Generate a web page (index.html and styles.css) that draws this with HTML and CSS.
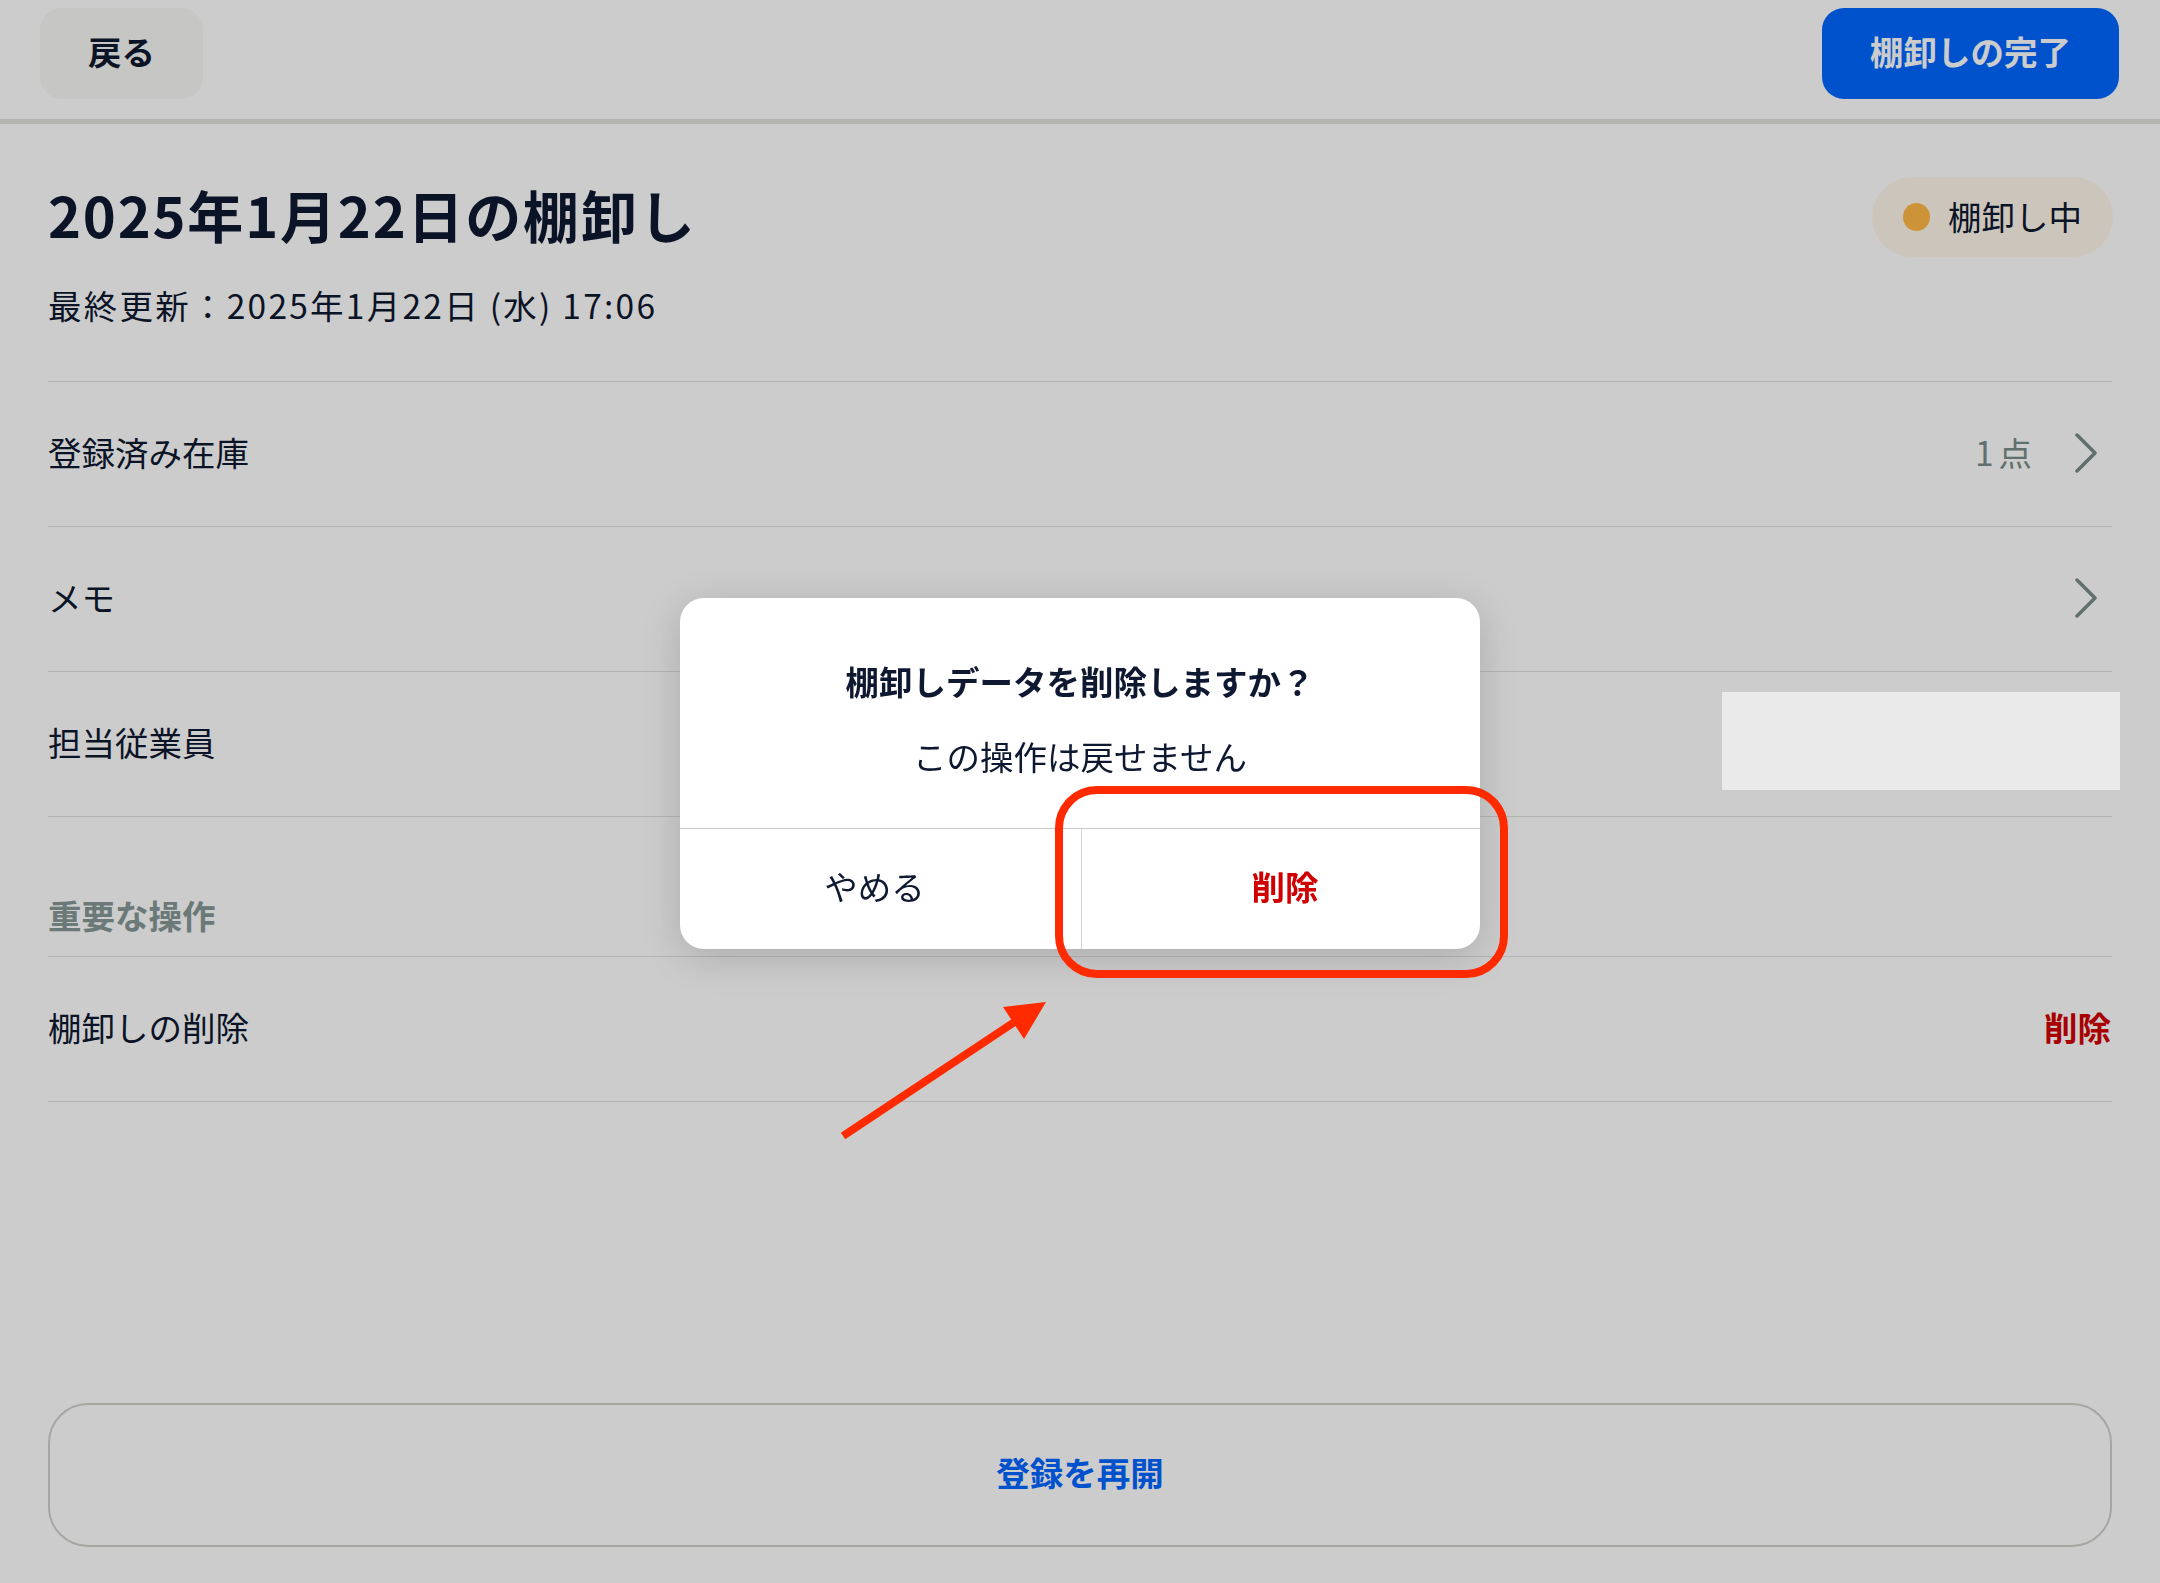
FILE: index.html
```html
<!DOCTYPE html>
<html lang="ja">
<head>
<meta charset="utf-8">
<title>棚卸し</title>
<link rel="stylesheet" href="styles.css">
</head>
<body>
<div class="page">
  <header class="topbar">
    <button class="btn btn-back">戻る</button>
    <button class="btn btn-primary">棚卸しの完了</button>
  </header>
  <main class="content">
    <div class="title-row">
      <h1 class="title">2025年1月22日の棚卸し</h1>
      <span class="badge"><span class="dot"></span>棚卸し中</span>
    </div>
    <p class="updated">最終更新：2025年1月22日 (水) 17:06</p>

    <ul class="list">
      <li class="row">
        <span class="label">登録済み在庫</span>
        <span class="trail"><span class="count">1点</span>
          <svg class="chev" viewBox="0 0 40 40" width="40" height="40"><path d="M11 2 L29 20 L11 38"/></svg>
        </span>
      </li>
      <li class="row">
        <span class="label">メモ</span>
        <span class="trail">
          <svg class="chev" viewBox="0 0 40 40" width="40" height="40"><path d="M11 2 L29 20 L11 38"/></svg>
        </span>
      </li>
      <li class="row">
        <span class="label">担当従業員</span>
      </li>
    </ul>

    <section class="danger">
      <h2 class="section-title">重要な操作</h2>
      <ul class="list">
        <li class="row">
          <span class="label">棚卸しの削除</span>
          <span class="danger-link">削除</span>
        </li>
      </ul>
    </section>

    <button class="btn-outline">登録を再開</button>
  </main>
</div>

<div class="backdrop"></div>
<div class="redact"></div>

<div class="dialog" role="dialog">
  <div class="dialog-body">
    <p class="dialog-title">棚卸しデータを削除しますか？</p>
    <p class="dialog-text">この操作は戻せません</p>
  </div>
  <div class="dialog-actions">
    <button class="dialog-btn dialog-btn-cancel">やめる</button>
    <button class="dialog-btn dialog-btn-danger">削除</button>
  </div>
</div>

<div class="callout-box"></div>
<svg class="callout-arrow" viewBox="0 0 230 160" width="230" height="160">
  <line x1="13" y1="146" x2="186" y2="31" stroke="#ff2a00" stroke-width="8"/>
  <polygon points="216,12 173,17 194,49" fill="#ff2a00"/>
</svg>
</body>
</html>
```

FILE: styles.css
```css
* { box-sizing: border-box; }

html, body {
  margin: 0;
  padding: 0;
}

body {
  width: 2160px;
  min-height: 1583px;
  background: #ffffff;
  color: #0e1830;
  font-family: "Noto Sans CJK JP", "Noto Sans", sans-serif;
  font-size: 33.5px;
  line-height: 50px;
}

.page {
  min-height: 1583px;
  display: flex;
  flex-direction: column;
}

/* Top bar */
.topbar {
  display: flex;
  justify-content: space-between;
  align-items: flex-start;
  padding: 8px 41px 20px 40px;
  border-bottom: 5px solid #e2e2dc;
}

.btn {
  font-family: inherit;
  font-size: 33.5px;
  font-weight: 700;
  height: 91px;
  border: none;
  border-radius: 22px;
  padding: 0 48px 6px;
  line-height: 85px;
  cursor: pointer;
}

.btn-back {
  background: #f8f8f5;
  color: #0e1830;
}

.btn-primary {
  background: #0066ff;
  color: #ffffff;
}

/* Content */
.content {
  flex: 1;
  display: flex;
  flex-direction: column;
  padding: 0 48px 36px;
}

.title-row {
  margin-top: 53px;
  display: flex;
  justify-content: space-between;
  align-items: center;
  height: 80px;
}

.title {
  margin: 0 0 6px;
  font-size: 56px;
  font-weight: 700;
  line-height: 74px;
  letter-spacing: 1.8px;
}

.badge {
  display: flex;
  align-items: center;
  height: 80px;
  padding: 0 31px 2px;
  border-radius: 40px;
  background: #fff7eb;
  font-size: 33.5px;
  margin-right: -1px;
}

.dot {
  width: 27px;
  height: 28px;
  border-radius: 50%;
  background: #ffb848;
  margin-right: 18px;
  margin-top: 2px;
}

.updated {
  margin: 23px 0 0;
  font-size: 33.5px;
  line-height: 50px;
  letter-spacing: 2.25px;
}

.list {
  list-style: none;
  margin: 51px 0 0;
  padding: 0;
  border-top: 1px solid #e1e1e1;
}

.row {
  height: 145px;
  padding-bottom: 4px;
  border-bottom: 1px solid #e1e1e1;
  display: flex;
  align-items: center;
  justify-content: space-between;
}

.trail {
  display: flex;
  align-items: center;
  gap: 34px;
  padding-right: 6px;
}

.count {
  color: #778c8a;
  letter-spacing: 5px;
  margin-right: -5px;
}

.chev {
  display: block;
  fill: none;
  stroke: #778c8a;
  stroke-width: 3.5;
  stroke-linecap: round;
  stroke-linejoin: round;
  margin-top: 2px;
}

.section-title {
  margin: 73px 0 0;
  font-size: 33.5px;
  font-weight: 700;
  line-height: 50px;
  color: #869896;
}

.danger .list {
  margin-top: 16px;
}

.danger-link {
  color: #d20000;
  font-weight: 700;
  margin-right: 1px;
}

.btn-outline {
  margin-top: auto;
  height: 144px;
  width: 100%;
  padding-bottom: 8px;
  border: 2px solid #d0d0cb;
  border-radius: 40px;
  background: transparent;
  color: #0066ff;
  font-family: inherit;
  font-size: 33.5px;
  font-weight: 700;
}

/* Modal layer */
.backdrop {
  position: fixed;
  inset: 0;
  background: rgba(0, 0, 0, 0.2);
}

.redact {
  position: absolute;
  left: 1722px;
  top: 692px;
  width: 398px;
  height: 98px;
  background: #eaeaea;
}

.dialog {
  position: absolute;
  left: 680px;
  top: 598px;
  width: 800px;
  height: 351px;
  background: #ffffff;
  border-radius: 24px;
  box-shadow: 0 8px 40px rgba(0, 0, 0, 0.16);
  display: flex;
  flex-direction: column;
  overflow: hidden;
}

.dialog-body {
  padding: 58px 20px 47px;
  text-align: center;
}

.dialog-title {
  margin: 0;
  font-weight: 700;
  line-height: 50px;
}

.dialog-text {
  margin: 25px 0 0;
  line-height: 50px;
}

.dialog-actions {
  flex: 1;
  display: flex;
  border-top: 1px solid #c8c8c8;
}

.dialog-btn {
  border: none;
  background: transparent;
  font-family: inherit;
  font-size: 33.5px;
  color: #0e1830;
  padding-bottom: 8px;
}

.dialog-btn-cancel {
  flex: 0 0 401px;
  padding-right: 18px;
}

.dialog-btn-danger {
  flex: 1;
  border-left: 1px solid #d4d4d4;
  padding-left: 14px;
  color: #d00000;
  font-weight: 700;
}

/* Annotations */
.callout-box {
  position: absolute;
  left: 1055px;
  top: 786px;
  width: 453px;
  height: 192px;
  border: 8px solid #ff2a00;
  border-radius: 42px;
}

.callout-arrow {
  position: absolute;
  left: 830px;
  top: 990px;
}
```
